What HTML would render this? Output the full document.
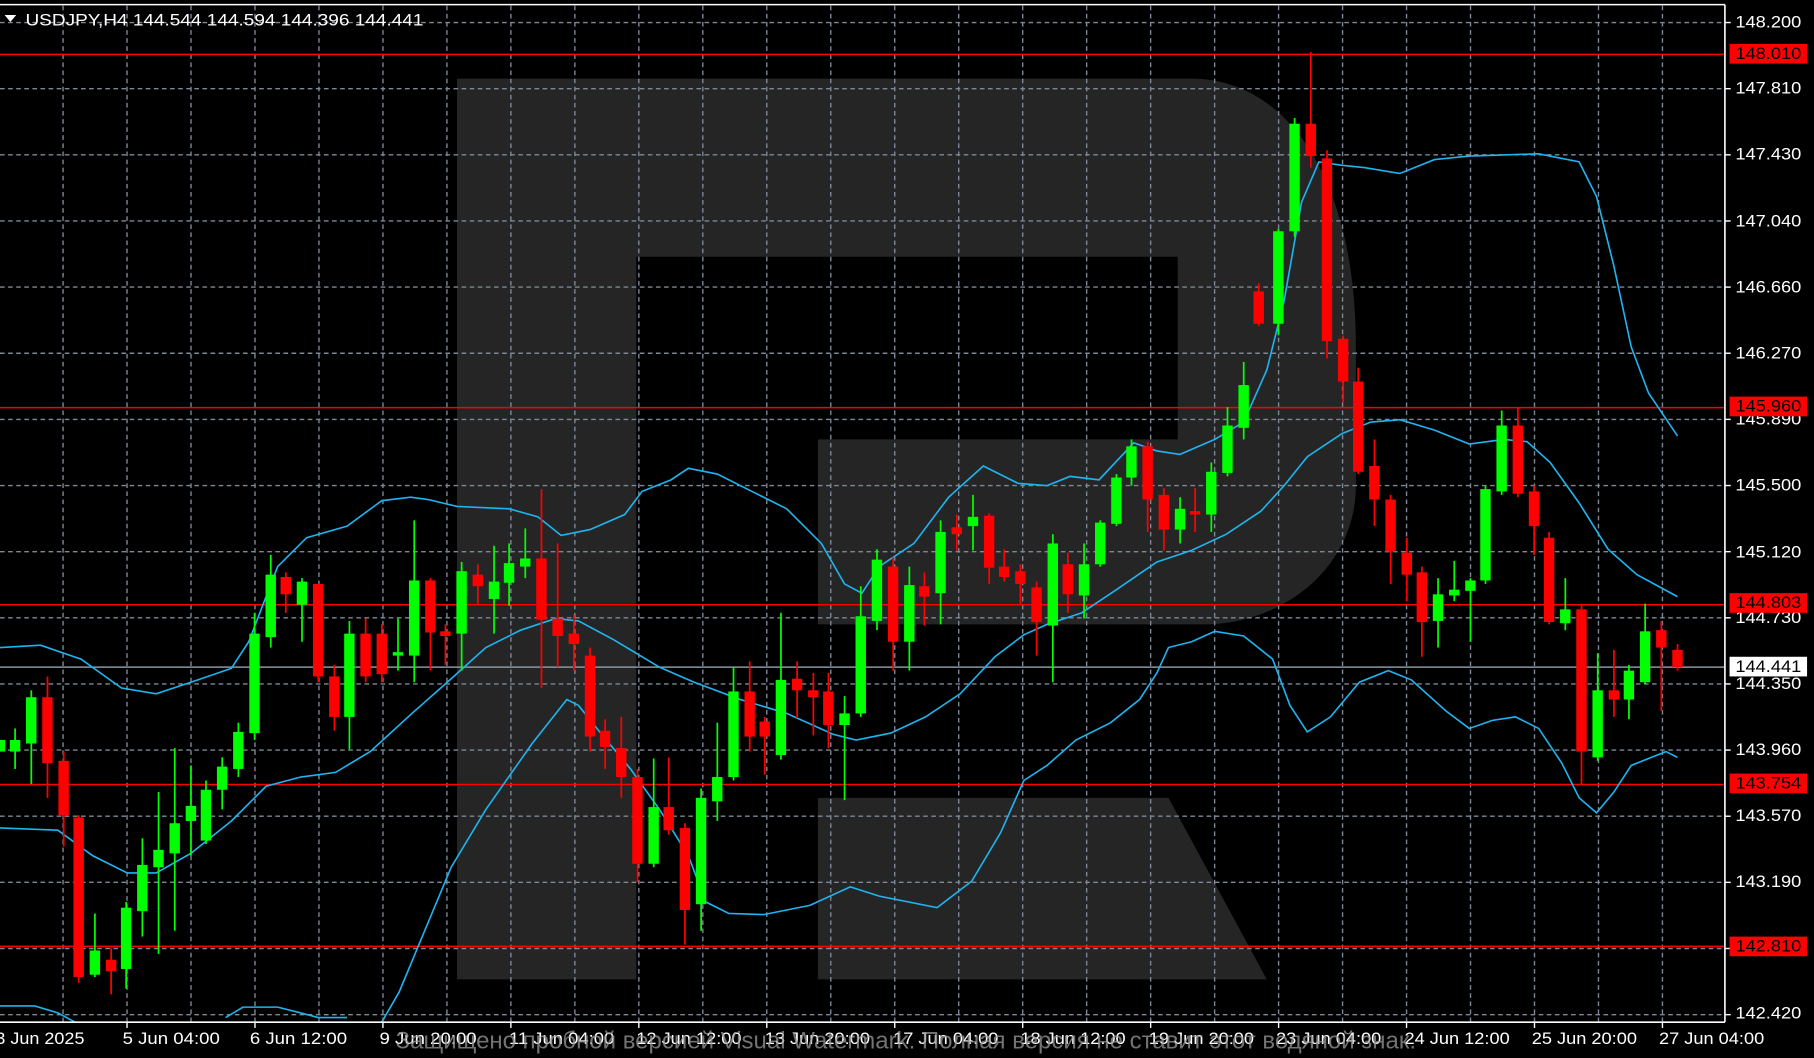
<!DOCTYPE html>
<html><head><meta charset="utf-8"><style>
html,body{margin:0;padding:0;background:#000;overflow:hidden}
svg{display:block}
text{font-family:"Liberation Sans",sans-serif}
</style></head><body>
<svg width="1814" height="1058" viewBox="0 0 1568 915" preserveAspectRatio="none" xmlns="http://www.w3.org/2000/svg">
<rect width="1568" height="915" fill="#000"/>
<path d="M395,68 H1030 C1110,68 1172,150 1172,300 V420 C1172,490 1110,540 1040,540 H707 V380 H1018 V222 H550 V847 H395 Z" fill="#252525"/>
<polygon points="707,690 1010,690 1095,847 707,847" fill="#252525"/>
<g stroke="#7d8896" stroke-width="1.2" stroke-dasharray="4 3">
<line x1="0" y1="19.5" x2="1491" y2="19.5"/><line x1="0" y1="76.7" x2="1491" y2="76.7"/><line x1="0" y1="133.9" x2="1491" y2="133.9"/><line x1="0" y1="191.1" x2="1491" y2="191.1"/><line x1="0" y1="248.3" x2="1491" y2="248.3"/><line x1="0" y1="305.5" x2="1491" y2="305.5"/><line x1="0" y1="362.7" x2="1491" y2="362.7"/><line x1="0" y1="419.9" x2="1491" y2="419.9"/><line x1="0" y1="477.1" x2="1491" y2="477.1"/><line x1="0" y1="534.3" x2="1491" y2="534.3"/><line x1="0" y1="591.5" x2="1491" y2="591.5"/><line x1="0" y1="648.7" x2="1491" y2="648.7"/><line x1="0" y1="705.9" x2="1491" y2="705.9"/><line x1="0" y1="763.1" x2="1491" y2="763.1"/><line x1="0" y1="820.3" x2="1491" y2="820.3"/><line x1="0" y1="877.5" x2="1491" y2="877.5"/>
<line x1="54.5" y1="5" x2="54.5" y2="884"/><line x1="109.8" y1="5" x2="109.8" y2="884"/><line x1="165.1" y1="5" x2="165.1" y2="884"/><line x1="220.4" y1="5" x2="220.4" y2="884"/><line x1="275.7" y1="5" x2="275.7" y2="884"/><line x1="331" y1="5" x2="331" y2="884"/><line x1="386.3" y1="5" x2="386.3" y2="884"/><line x1="441.6" y1="5" x2="441.6" y2="884"/><line x1="496.9" y1="5" x2="496.9" y2="884"/><line x1="552.2" y1="5" x2="552.2" y2="884"/><line x1="607.5" y1="5" x2="607.5" y2="884"/><line x1="662.8" y1="5" x2="662.8" y2="884"/><line x1="718.1" y1="5" x2="718.1" y2="884"/><line x1="773.4" y1="5" x2="773.4" y2="884"/><line x1="828.7" y1="5" x2="828.7" y2="884"/><line x1="884" y1="5" x2="884" y2="884"/><line x1="939.3" y1="5" x2="939.3" y2="884"/><line x1="994.6" y1="5" x2="994.6" y2="884"/><line x1="1049.9" y1="5" x2="1049.9" y2="884"/><line x1="1105.2" y1="5" x2="1105.2" y2="884"/><line x1="1160.5" y1="5" x2="1160.5" y2="884"/><line x1="1215.8" y1="5" x2="1215.8" y2="884"/><line x1="1271.1" y1="5" x2="1271.1" y2="884"/><line x1="1326.4" y1="5" x2="1326.4" y2="884"/><line x1="1381.7" y1="5" x2="1381.7" y2="884"/><line x1="1437" y1="5" x2="1437" y2="884"/>
</g>
<g stroke="#ff0000" stroke-width="1.3">
<line x1="0" y1="47" x2="1491" y2="47"/><line x1="0" y1="352.5" x2="1491" y2="352.5"/><line x1="0" y1="523" x2="1491" y2="523"/><line x1="0" y1="678.5" x2="1491" y2="678.5"/><line x1="0" y1="818.5" x2="1491" y2="818.5"/>
</g>
<line x1="0" y1="577" x2="1491" y2="577" stroke="#8a96a4" stroke-width="1.3"/>
<g fill="none" stroke="#1eb4f0" stroke-width="1.4">
<polyline points="0,560 35,558 70,570 105,595 135,600 165,590 200,578 215,555 240,490 265,465 300,455 330,433 355,430 370,432 395,438 440,440 465,447 485,463 510,458 540,445 555,425 580,415 595,405 620,410 650,425 680,440 710,470 730,505 745,513 760,490 790,470 820,430 850,403 880,418 905,420 925,412 950,415 980,383 1000,390 1020,393 1050,380 1075,365 1095,320 1110,260 1125,175 1140,140 1160,143 1180,145 1210,150 1240,138 1270,135 1300,134 1330,133 1365,140 1380,170 1395,230 1410,300 1425,340 1450,377"/>
<polyline points="0,716 50,718 80,740 110,755 135,755 165,738 200,710 230,680 260,672 290,668 320,650 355,618 390,587 420,560 450,545 480,535 500,537 530,553 570,577 600,590 640,605 680,617 720,635 740,640 770,634 800,620 830,600 860,568 885,549 905,540 935,530 965,510 1000,486 1030,476 1060,462 1090,442 1110,420 1130,395 1160,375 1185,365 1210,363 1240,372 1270,384 1300,380 1320,382 1340,400 1365,435 1390,475 1415,497 1450,516"/>
<polyline points="0,870 30,870 50,876 65,884"/>
<polyline points="195,880 210,871 240,871 260,876 275,880 300,880"/>
<polyline points="330,884 345,858 365,810 390,750 420,700 460,643 490,605 500,610 520,635 545,665 570,700 595,740 610,780 630,790 660,791 700,783 735,767 760,775 810,785 840,762 865,720 885,675 905,662 930,640 960,625 985,605 1000,582 1010,560 1030,555 1050,546 1075,550 1100,570 1115,610 1130,633 1150,620 1175,590 1200,580 1220,588 1250,615 1270,630 1290,623 1310,620 1330,630 1350,660 1365,690 1380,703 1395,685 1410,662 1440,650 1450,655"/>
</g>
<g fill="#00ff00">
<rect x="-4.5" y="640" width="9" height="10"/>
<rect x="12.3" y="630" width="1.5" height="35"/><rect x="8.5" y="640" width="9" height="10"/>
<rect x="26.3" y="597" width="1.5" height="81"/><rect x="22.5" y="603" width="9" height="40"/>
<rect x="81.3" y="790" width="1.5" height="55"/><rect x="77.5" y="822" width="9" height="21"/>
<rect x="108.3" y="780" width="1.5" height="75"/><rect x="104.5" y="785" width="9" height="53"/>
<rect x="122.3" y="725" width="1.5" height="85"/><rect x="118.5" y="748" width="9" height="40"/>
<rect x="136.3" y="685" width="1.5" height="140"/><rect x="132.5" y="735" width="9" height="15"/>
<rect x="150.3" y="647" width="1.5" height="158"/><rect x="146.5" y="712" width="9" height="26"/>
<rect x="164.3" y="662" width="1.5" height="78"/><rect x="160.5" y="697" width="9" height="13"/>
<rect x="177.3" y="675" width="1.5" height="55"/><rect x="173.5" y="683" width="9" height="44"/>
<rect x="191.3" y="655" width="1.5" height="45"/><rect x="187.5" y="663" width="9" height="20"/>
<rect x="205.3" y="625" width="1.5" height="47"/><rect x="201.5" y="633" width="9" height="32"/>
<rect x="219.3" y="530" width="1.5" height="110"/><rect x="215.5" y="548" width="9" height="86"/>
<rect x="233.3" y="480" width="1.5" height="80"/><rect x="229.5" y="497" width="9" height="54"/>
<rect x="260.3" y="500" width="1.5" height="55"/><rect x="256.5" y="503" width="9" height="20"/>
<rect x="301.3" y="537" width="1.5" height="111"/><rect x="297.5" y="548" width="9" height="72"/>
<rect x="343.3" y="535" width="1.5" height="45"/><rect x="339.5" y="564" width="9" height="3"/>
<rect x="357.3" y="450" width="1.5" height="140"/><rect x="353.5" y="502" width="9" height="65"/>
<rect x="398.3" y="486" width="1.5" height="94"/><rect x="394.5" y="494" width="9" height="54"/>
<rect x="426.3" y="472" width="1.5" height="76"/><rect x="422.5" y="503" width="9" height="15"/>
<rect x="439.3" y="470" width="1.5" height="54"/><rect x="435.5" y="487" width="9" height="17"/>
<rect x="453.3" y="457" width="1.5" height="43"/><rect x="449.5" y="483" width="9" height="7"/>
<rect x="564.3" y="656" width="1.5" height="94"/><rect x="560.5" y="698" width="9" height="49"/>
<rect x="605.3" y="682" width="1.5" height="123"/><rect x="601.5" y="690" width="9" height="92"/>
<rect x="619.3" y="625" width="1.5" height="85"/><rect x="615.5" y="672" width="9" height="21"/>
<rect x="633.3" y="577" width="1.5" height="98"/><rect x="629.5" y="598" width="9" height="74"/>
<rect x="674.3" y="530" width="1.5" height="127"/><rect x="670.5" y="588" width="9" height="65"/>
<rect x="729.3" y="602" width="1.5" height="90"/><rect x="725.5" y="617" width="9" height="10"/>
<rect x="743.3" y="507" width="1.5" height="113"/><rect x="739.5" y="533" width="9" height="84"/>
<rect x="757.3" y="475" width="1.5" height="70"/><rect x="753.5" y="484" width="9" height="53"/>
<rect x="785.3" y="490" width="1.5" height="90"/><rect x="781.5" y="506" width="9" height="49"/>
<rect x="812.3" y="450" width="1.5" height="90"/><rect x="808.5" y="460" width="9" height="53"/>
<rect x="840.3" y="428" width="1.5" height="48"/><rect x="836.5" y="447" width="9" height="8"/>
<rect x="909.3" y="462" width="1.5" height="128"/><rect x="905.5" y="470" width="9" height="71"/>
<rect x="936.3" y="470" width="1.5" height="65"/><rect x="932.5" y="488" width="9" height="27"/>
<rect x="950.3" y="450" width="1.5" height="40"/><rect x="946.5" y="452" width="9" height="36"/>
<rect x="964.3" y="410" width="1.5" height="45"/><rect x="960.5" y="413" width="9" height="40"/>
<rect x="977.3" y="380" width="1.5" height="40"/><rect x="973.5" y="386" width="9" height="27"/>
<rect x="1019.3" y="430" width="1.5" height="40"/><rect x="1015.5" y="440" width="9" height="18"/>
<rect x="1046.3" y="400" width="1.5" height="60"/><rect x="1042.5" y="408" width="9" height="37"/>
<rect x="1060.3" y="352" width="1.5" height="60"/><rect x="1056.5" y="368" width="9" height="41"/>
<rect x="1074.3" y="313" width="1.5" height="67"/><rect x="1070.5" y="333" width="9" height="37"/>
<rect x="1104.3" y="198" width="1.5" height="92"/><rect x="1100.5" y="200" width="9" height="80"/>
<rect x="1118.3" y="102" width="1.5" height="103"/><rect x="1114.5" y="107" width="9" height="93"/>
<rect x="1242.3" y="500" width="1.5" height="60"/><rect x="1238.5" y="514" width="9" height="23"/>
<rect x="1256.3" y="485" width="1.5" height="35"/><rect x="1252.5" y="510" width="9" height="5"/>
<rect x="1270.3" y="500" width="1.5" height="55"/><rect x="1266.5" y="502" width="9" height="9"/>
<rect x="1283.3" y="420" width="1.5" height="85"/><rect x="1279.5" y="423" width="9" height="79"/>
<rect x="1297.3" y="355" width="1.5" height="73"/><rect x="1293.5" y="368" width="9" height="57"/>
<rect x="1352.3" y="500" width="1.5" height="45"/><rect x="1348.5" y="527" width="9" height="12"/>
<rect x="1380.3" y="565" width="1.5" height="93"/><rect x="1376.5" y="597" width="9" height="58"/>
<rect x="1407.3" y="575" width="1.5" height="47"/><rect x="1403.5" y="580" width="9" height="25"/>
<rect x="1421.3" y="522" width="1.5" height="70"/><rect x="1417.5" y="546" width="9" height="44"/>
</g>
<g fill="#ff0000">
<rect x="40.3" y="585" width="1.5" height="105"/><rect x="36.5" y="603" width="9" height="57"/>
<rect x="54.3" y="650" width="1.5" height="82"/><rect x="50.5" y="658" width="9" height="47"/>
<rect x="67.3" y="705" width="1.5" height="145"/><rect x="63.5" y="707" width="9" height="138"/>
<rect x="95.3" y="820" width="1.5" height="40"/><rect x="91.5" y="830" width="9" height="10"/>
<rect x="246.3" y="495" width="1.5" height="35"/><rect x="242.5" y="499" width="9" height="15"/>
<rect x="274.3" y="505" width="1.5" height="85"/><rect x="270.5" y="505" width="9" height="80"/>
<rect x="288.3" y="575" width="1.5" height="57"/><rect x="284.5" y="585" width="9" height="35"/>
<rect x="315.3" y="535" width="1.5" height="55"/><rect x="311.5" y="548" width="9" height="37"/>
<rect x="329.3" y="540" width="1.5" height="50"/><rect x="325.5" y="548" width="9" height="35"/>
<rect x="371.3" y="500" width="1.5" height="80"/><rect x="367.5" y="502" width="9" height="45"/>
<rect x="384.3" y="540" width="1.5" height="35"/><rect x="380.5" y="546" width="9" height="4"/>
<rect x="412.3" y="488" width="1.5" height="35"/><rect x="408.5" y="497" width="9" height="10"/>
<rect x="467.3" y="423" width="1.5" height="172"/><rect x="463.5" y="483" width="9" height="53"/>
<rect x="481.3" y="470" width="1.5" height="107"/><rect x="477.5" y="535" width="9" height="15"/>
<rect x="495.3" y="532" width="1.5" height="48"/><rect x="491.5" y="548" width="9" height="9"/>
<rect x="509.3" y="560" width="1.5" height="90"/><rect x="505.5" y="567" width="9" height="70"/>
<rect x="522.3" y="622" width="1.5" height="43"/><rect x="518.5" y="632" width="9" height="14"/>
<rect x="536.3" y="620" width="1.5" height="70"/><rect x="532.5" y="647" width="9" height="25"/>
<rect x="550.3" y="665" width="1.5" height="98"/><rect x="546.5" y="672" width="9" height="75"/>
<rect x="577.3" y="655" width="1.5" height="67"/><rect x="573.5" y="698" width="9" height="20"/>
<rect x="591.3" y="712" width="1.5" height="105"/><rect x="587.5" y="716" width="9" height="71"/>
<rect x="647.3" y="572" width="1.5" height="78"/><rect x="643.5" y="598" width="9" height="39"/>
<rect x="660.3" y="620" width="1.5" height="50"/><rect x="656.5" y="624" width="9" height="13"/>
<rect x="688.3" y="572" width="1.5" height="49"/><rect x="684.5" y="587" width="9" height="10"/>
<rect x="702.3" y="582" width="1.5" height="54"/><rect x="698.5" y="597" width="9" height="6"/>
<rect x="715.3" y="582" width="1.5" height="65"/><rect x="711.5" y="598" width="9" height="29"/>
<rect x="771.3" y="482" width="1.5" height="98"/><rect x="767.5" y="490" width="9" height="65"/>
<rect x="798.3" y="495" width="1.5" height="46"/><rect x="794.5" y="507" width="9" height="9"/>
<rect x="826.3" y="445" width="1.5" height="31"/><rect x="822.5" y="456" width="9" height="6"/>
<rect x="854.3" y="444" width="1.5" height="61"/><rect x="850.5" y="446" width="9" height="45"/>
<rect x="867.3" y="475" width="1.5" height="28"/><rect x="863.5" y="490" width="9" height="9"/>
<rect x="881.3" y="488" width="1.5" height="35"/><rect x="877.5" y="494" width="9" height="11"/>
<rect x="895.3" y="503" width="1.5" height="64"/><rect x="891.5" y="508" width="9" height="30"/>
<rect x="922.3" y="478" width="1.5" height="52"/><rect x="918.5" y="488" width="9" height="26"/>
<rect x="991.3" y="382" width="1.5" height="78"/><rect x="987.5" y="386" width="9" height="46"/>
<rect x="1005.3" y="422" width="1.5" height="54"/><rect x="1001.5" y="428" width="9" height="30"/>
<rect x="1032.3" y="422" width="1.5" height="38"/><rect x="1028.5" y="442" width="9" height="3"/>
<rect x="1087.3" y="245" width="1.5" height="37"/><rect x="1083.5" y="252" width="9" height="28"/>
<rect x="1132.3" y="45" width="1.5" height="100"/><rect x="1128.5" y="107" width="9" height="28"/>
<rect x="1146.3" y="130" width="1.5" height="180"/><rect x="1142.5" y="137" width="9" height="158"/>
<rect x="1160.3" y="290" width="1.5" height="58"/><rect x="1156.5" y="293" width="9" height="37"/>
<rect x="1173.3" y="318" width="1.5" height="92"/><rect x="1169.5" y="330" width="9" height="78"/>
<rect x="1187.3" y="380" width="1.5" height="75"/><rect x="1183.5" y="403" width="9" height="29"/>
<rect x="1201.3" y="428" width="1.5" height="77"/><rect x="1197.5" y="432" width="9" height="45"/>
<rect x="1215.3" y="465" width="1.5" height="55"/><rect x="1211.5" y="478" width="9" height="19"/>
<rect x="1228.3" y="490" width="1.5" height="78"/><rect x="1224.5" y="495" width="9" height="43"/>
<rect x="1311.3" y="352" width="1.5" height="78"/><rect x="1307.5" y="368" width="9" height="59"/>
<rect x="1325.3" y="420" width="1.5" height="60"/><rect x="1321.5" y="425" width="9" height="30"/>
<rect x="1338.3" y="460" width="1.5" height="80"/><rect x="1334.5" y="465" width="9" height="73"/>
<rect x="1366.3" y="522" width="1.5" height="156"/><rect x="1362.5" y="527" width="9" height="123"/>
<rect x="1394.3" y="562" width="1.5" height="58"/><rect x="1390.5" y="597" width="9" height="8"/>
<rect x="1435.3" y="537" width="1.5" height="78"/><rect x="1431.5" y="545" width="9" height="15"/>
<rect x="1449.3" y="557" width="1.5" height="23"/><rect x="1445.5" y="562" width="9" height="15"/>
</g>
<g stroke="#fff" stroke-width="1.4">
<line x1="0" y1="4" x2="1491" y2="4"/>
<line x1="1491" y1="4" x2="1491" y2="884"/>
<line x1="0" y1="884" x2="1491" y2="884"/>
</g>
<g stroke="#fff" stroke-width="1.2">
<line x1="1491" y1="19.5" x2="1496" y2="19.5"/><line x1="1491" y1="76.7" x2="1496" y2="76.7"/><line x1="1491" y1="133.9" x2="1496" y2="133.9"/><line x1="1491" y1="191.1" x2="1496" y2="191.1"/><line x1="1491" y1="248.3" x2="1496" y2="248.3"/><line x1="1491" y1="305.5" x2="1496" y2="305.5"/><line x1="1491" y1="362.7" x2="1496" y2="362.7"/><line x1="1491" y1="419.9" x2="1496" y2="419.9"/><line x1="1491" y1="477.1" x2="1496" y2="477.1"/><line x1="1491" y1="534.3" x2="1496" y2="534.3"/><line x1="1491" y1="591.5" x2="1496" y2="591.5"/><line x1="1491" y1="648.7" x2="1496" y2="648.7"/><line x1="1491" y1="705.9" x2="1496" y2="705.9"/><line x1="1491" y1="763.1" x2="1496" y2="763.1"/><line x1="1491" y1="820.3" x2="1496" y2="820.3"/><line x1="1491" y1="877.5" x2="1496" y2="877.5"/>
<line x1="109.8" y1="884" x2="109.8" y2="889"/><line x1="220.4" y1="884" x2="220.4" y2="889"/><line x1="331" y1="884" x2="331" y2="889"/><line x1="441.6" y1="884" x2="441.6" y2="889"/><line x1="552.2" y1="884" x2="552.2" y2="889"/><line x1="662.8" y1="884" x2="662.8" y2="889"/><line x1="773.4" y1="884" x2="773.4" y2="889"/><line x1="884" y1="884" x2="884" y2="889"/><line x1="994.6" y1="884" x2="994.6" y2="889"/><line x1="1105.2" y1="884" x2="1105.2" y2="889"/><line x1="1215.8" y1="884" x2="1215.8" y2="889"/><line x1="1326.4" y1="884" x2="1326.4" y2="889"/><line x1="1437" y1="884" x2="1437" y2="889"/>
</g>
<g fill="#fff" font-size="14">
<text x="1500" y="24" textLength="57" lengthAdjust="spacingAndGlyphs">148.200</text><text x="1500" y="81" textLength="57" lengthAdjust="spacingAndGlyphs">147.810</text><text x="1500" y="138" textLength="57" lengthAdjust="spacingAndGlyphs">147.430</text><text x="1500" y="196" textLength="57" lengthAdjust="spacingAndGlyphs">147.040</text><text x="1500" y="253" textLength="57" lengthAdjust="spacingAndGlyphs">146.660</text><text x="1500" y="310" textLength="57" lengthAdjust="spacingAndGlyphs">146.270</text><text x="1500" y="367" textLength="57" lengthAdjust="spacingAndGlyphs">145.890</text><text x="1500" y="424" textLength="57" lengthAdjust="spacingAndGlyphs">145.500</text><text x="1500" y="482" textLength="57" lengthAdjust="spacingAndGlyphs">145.120</text><text x="1500" y="539" textLength="57" lengthAdjust="spacingAndGlyphs">144.730</text><text x="1500" y="596" textLength="57" lengthAdjust="spacingAndGlyphs">144.350</text><text x="1500" y="653" textLength="57" lengthAdjust="spacingAndGlyphs">143.960</text><text x="1500" y="710" textLength="57" lengthAdjust="spacingAndGlyphs">143.570</text><text x="1500" y="767" textLength="57" lengthAdjust="spacingAndGlyphs">143.190</text><text x="1500" y="881" textLength="57" lengthAdjust="spacingAndGlyphs">142.420</text>
</g>
<rect x="1495" y="38" width="67" height="17" fill="#ff0000"/>
<rect x="1495" y="343" width="67" height="17" fill="#ff0000"/>
<rect x="1495" y="513" width="67" height="17" fill="#ff0000"/>
<rect x="1495" y="669" width="67" height="17" fill="#ff0000"/>
<rect x="1495" y="810" width="67" height="17" fill="#ff0000"/>
<rect x="1495" y="568" width="67" height="17" fill="#fff"/>
<g fill="#000" font-size="14">
<text x="1500" y="51" textLength="57" lengthAdjust="spacingAndGlyphs">148.010</text><text x="1500" y="356" textLength="57" lengthAdjust="spacingAndGlyphs">145.960</text><text x="1500" y="526" textLength="57" lengthAdjust="spacingAndGlyphs">144.803</text><text x="1500" y="682" textLength="57" lengthAdjust="spacingAndGlyphs">143.754</text><text x="1500" y="823" textLength="57" lengthAdjust="spacingAndGlyphs">142.810</text><text x="1500" y="581" textLength="57" lengthAdjust="spacingAndGlyphs">144.441</text>
</g>
<g fill="#fff" font-size="14">
<text x="-4" y="903" textLength="77" lengthAdjust="spacingAndGlyphs">3 Jun 2025</text><text x="106" y="903" textLength="84" lengthAdjust="spacingAndGlyphs">5 Jun 04:00</text><text x="216" y="903" textLength="84" lengthAdjust="spacingAndGlyphs">6 Jun 12:00</text><text x="328" y="903" textLength="84" lengthAdjust="spacingAndGlyphs">9 Jun 20:00</text><text x="440" y="903" textLength="91" lengthAdjust="spacingAndGlyphs">11 Jun 04:00</text><text x="550" y="903" textLength="91" lengthAdjust="spacingAndGlyphs">12 Jun 12:00</text><text x="661" y="903" textLength="91" lengthAdjust="spacingAndGlyphs">13 Jun 20:00</text><text x="772" y="903" textLength="91" lengthAdjust="spacingAndGlyphs">17 Jun 04:00</text><text x="882" y="903" textLength="91" lengthAdjust="spacingAndGlyphs">18 Jun 12:00</text><text x="993" y="903" textLength="91" lengthAdjust="spacingAndGlyphs">19 Jun 20:00</text><text x="1103" y="903" textLength="91" lengthAdjust="spacingAndGlyphs">23 Jun 04:00</text><text x="1214" y="903" textLength="91" lengthAdjust="spacingAndGlyphs">24 Jun 12:00</text><text x="1324" y="903" textLength="91" lengthAdjust="spacingAndGlyphs">25 Jun 20:00</text><text x="1434" y="903" textLength="91" lengthAdjust="spacingAndGlyphs">27 Jun 04:00</text>
</g>
<text x="342" y="907" font-size="21" fill="#9a9a9a" fill-opacity="0.75" textLength="882" lengthAdjust="spacingAndGlyphs">Защищено пробной версией Visual Watermark. Полная версия не ставит этот водяной знак.</text>
<polygon points="4,13 14,13 9,19" fill="#fff"/>
<text x="22" y="22" font-size="14.5" fill="#fff" textLength="344" lengthAdjust="spacingAndGlyphs">USDJPY,H4  144.544 144.594 144.396 144.441</text>
</svg>
</body></html>
